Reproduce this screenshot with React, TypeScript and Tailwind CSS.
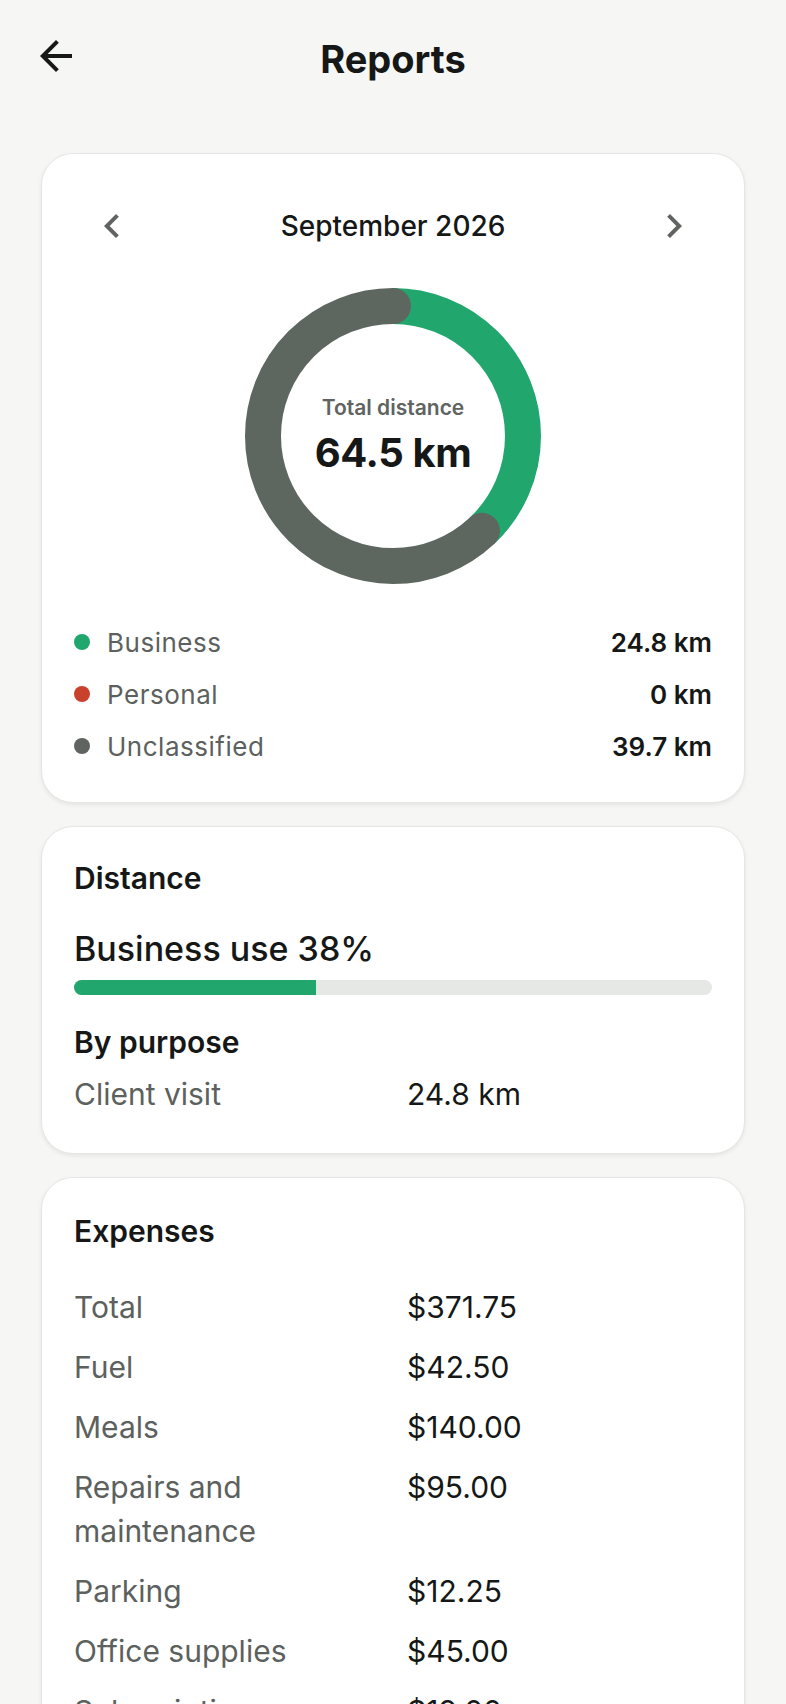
import React from 'react'

const font = { fontFamily: 'Inter, "Noto Sans", sans-serif' }

const ArrowBack = () => (
  <svg width="48" height="48" viewBox="0 0 24 24" fill="#161917">
    <path d="M20 11H7.83l5.59-5.59L12 4l-8 8 8 8 1.41-1.41L7.83 13H20v-2z" />
  </svg>
)

const ChevronLeft = () => (
  <svg width="48" height="48" viewBox="0 0 24 24" fill="#5f6461">
    <path d="M15.41 7.41L14 6l-6 6 6 6 1.41-1.41L10.83 12z" />
  </svg>
)

const ChevronRight = () => (
  <svg width="48" height="48" viewBox="0 0 24 24" fill="#5f6461">
    <path d="M8.59 16.59L10 18l6-6-6-6-1.41 1.41L13.17 12z" />
  </svg>
)

const Donut = ({ pct }: { pct: number }) => {
  const r = 130
  const c = 2 * Math.PI * r
  return (
    <svg width="296" height="296" viewBox="0 0 296 296">
      <g transform="rotate(-90 148 148)">
        <circle cx="148" cy="148" r={r} fill="none" stroke="#21a66e" strokeWidth="36" strokeDasharray={`${pct * c} ${c}`} />
        <circle
          cx="148"
          cy="148"
          r={r}
          fill="none"
          stroke="#5e6660"
          strokeWidth="36"
          strokeLinecap="round"
          strokeDasharray={`${(1 - pct) * c} ${c * 2}`}
          strokeDashoffset={-pct * c}
        />
      </g>
    </svg>
  )
}

const legend = [
  { label: 'Business', value: '24.8 km', color: 'bg-[#21a66e]' },
  { label: 'Personal', value: '0 km', color: 'bg-[#c9402c]' },
  { label: 'Unclassified', value: '39.7 km', color: 'bg-[#5f6461]' },
]

const expenses = [
  ['Total', '$371.75'],
  ['Fuel', '$42.50'],
  ['Meals', '$140.00'],
  ['Repairs and maintenance', '$95.00'],
  ['Parking', '$12.25'],
  ['Office supplies', '$45.00'],
  ['Subscriptions', '$19.00'],
  ['Tolls', '$18.00'],
]

const card = 'rounded-[32px] border border-[#e5e7e5] bg-white shadow-[0_2px_4px_rgba(0,0,0,0.07)] px-8'

export default function App() {
  return (
    <div className="min-h-screen bg-[#f6f7f5] text-[#151816]" style={font}>
      <div className="flex items-start px-8 pt-8">
        <button className="w-12 h-12 flex items-center justify-center">
          <ArrowBack />
        </button>
        <h1 className="flex-1 text-center text-[38px] leading-[42px] mt-[6px] font-bold">Reports</h1>
        <div className="w-12 h-12" />
      </div>

      <main className="flex flex-col gap-[23px] px-[41px] mt-[73px] pb-10">
        {/* summary */}
        <section className={`${card} pt-[48px] pb-[30px]`}>
          <div className="flex items-center justify-between px-[14px] h-12">
            <button className="w-12 h-12 flex items-center justify-center">
              <ChevronLeft />
            </button>
            <span className="text-[28px] font-medium">September 2026</span>
            <button className="w-12 h-12 flex items-center justify-center">
              <ChevronRight />
            </button>
          </div>

          <div className="relative mx-auto mt-[38px] w-[296px] h-[296px]">
            <Donut pct={0.38} />
            <div className="absolute inset-0 flex flex-col items-center justify-center">
              <span className="text-[21px] leading-[26px] font-semibold text-[#5f6461]">Total distance</span>
              <span className="text-[40px] leading-[48px] font-bold mt-[8px] tracking-[-0.01em]">64.5 km</span>
            </div>
          </div>

          <div className="mt-[32px] flex flex-col">
            {legend.map((l) => (
              <div key={l.label} className="flex items-center h-[52px]">
                <span className={`w-4 h-4 rounded-full ${l.color}`} />
                <span className="ml-[17px] flex-1 text-[26px] tracking-[0.02em] text-[#5c615e]">{l.label}</span>
                <span className="text-[26px] font-semibold">{l.value}</span>
              </div>
            ))}
          </div>
        </section>

        {/* distance */}
        <section className={`${card} pt-[31px] pb-[39px]`}>
          <h2 className="text-[30px] leading-[40px] font-semibold">Distance</h2>
          <div className="mt-[29px] text-[34px] leading-[44px] font-medium">Business use 38%</div>
          <div className="mt-[9px] h-[15px] rounded-full bg-[#e6e8e5] overflow-hidden">
            <div className="h-full w-[38%] bg-[#21a66e]" />
          </div>
          <h3 className="mt-[27px] text-[30px] leading-[40px] font-semibold">By purpose</h3>
          <div className="mt-[12px] flex text-[30px] leading-[40px]">
            <span className="w-[333px] text-[#5c615e]">Client visit</span>
            <span>24.8 km</span>
          </div>
        </section>

        {/* expenses */}
        <section className={`${card} pt-[33px] pb-[36px]`}>
          <h2 className="text-[30px] leading-[40px] font-semibold">Expenses</h2>
          <div className="mt-[34px] flex flex-col gap-[16px]">
            {expenses.map(([label, value]) => (
              <div key={label} className="flex text-[30px] leading-[44px]">
                <span className="w-[333px] pr-4 text-[#5c615e]">{label}</span>
                <span>{value}</span>
              </div>
            ))}
          </div>
        </section>
      </main>
    </div>
  )
}
